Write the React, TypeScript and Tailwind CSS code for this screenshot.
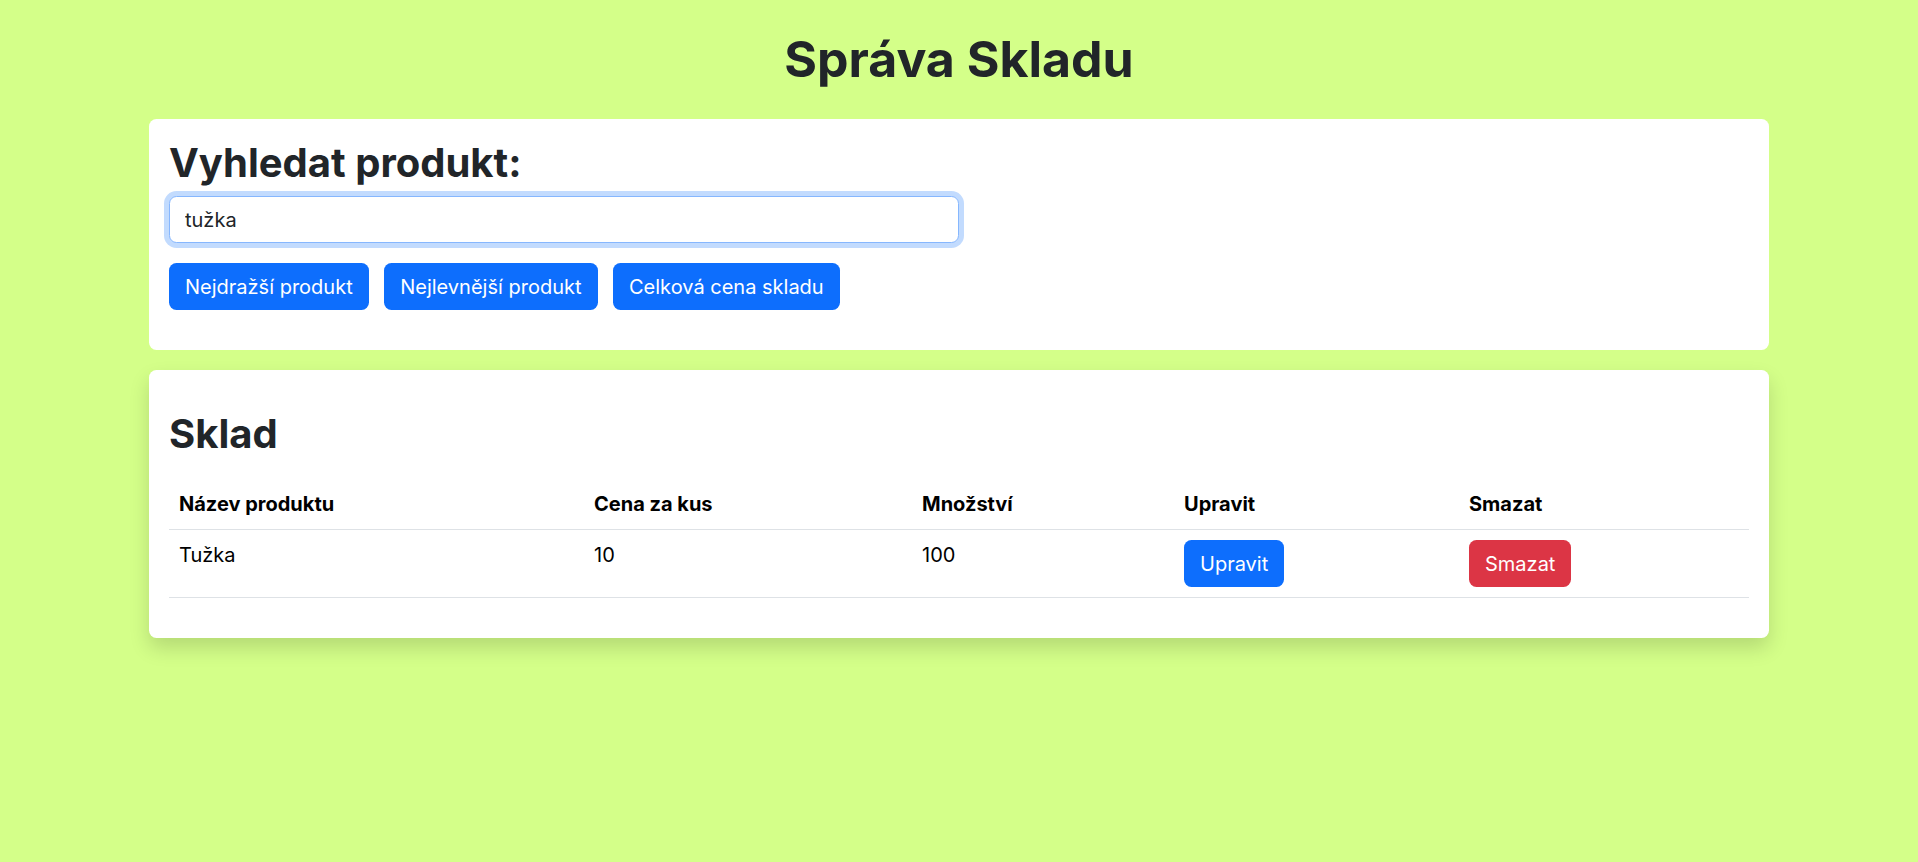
import { useState } from 'react'

type Product = { name: string; price: number; qty: number }

const products: Product[] = [{ name: 'Tužka', price: 10, qty: 100 }]

export default function App() {
  const [query, setQuery] = useState('tužka')

  return (
    <div className="min-h-screen bg-[#d4ff89] font-[Inter,'Noto_Sans',sans-serif] text-[20px] leading-[30px] text-[#212529]">
      <div className="w-[1620px] mx-auto">
        <h1 className="text-center text-[50px] leading-[60px] font-bold pt-[29px] pb-[30px]">Správa Skladu</h1>

        {/* search */}
        <div className="bg-white rounded-[7.5px] p-[20px]">
          <h2 className="text-[40px] leading-[48px] font-bold mb-[9px]">Vyhledat produkt:</h2>
          <input
            autoFocus
            value={query}
            onChange={(e) => setQuery(e.target.value)}
            className="block w-1/2 h-[47px] px-[15px] rounded-[7.5px] border-[1.25px] border-[#86b7fe] bg-white text-[20px] text-[#212529] outline-none shadow-[0_0_0_5px_rgba(13,110,253,0.25)]"
          />
          <div className="flex gap-[15.5px] mt-[20px] mb-[20px]">
            <button className="h-[47px] px-[16px] rounded-[7.5px] bg-[#0d6efd] text-white">Nejdražší produkt</button>
            <button className="h-[47px] px-[16px] rounded-[7.5px] bg-[#0d6efd] text-white">Nejlevnější produkt</button>
            <button className="h-[47px] px-[16px] rounded-[7.5px] bg-[#0d6efd] text-white">Celková cena skladu</button>
          </div>
        </div>

        {/* table */}
        <div className="bg-white rounded-[7.5px] p-[20px] mt-[20px] shadow-[0_10px_20px_rgba(0,0,0,0.15)]">
          <h2 className="text-[40px] leading-[48px] font-bold mt-[20px] mb-[21px]">Sklad</h2>
          <table className="w-full border-collapse text-black mb-[20px]">
            <thead>
              <tr className="border-b border-[#dee2e6] text-left">
                <th className="w-[415px] p-[10px] font-bold">Název produktu</th>
                <th className="w-[328px] p-[10px] font-bold">Cena za kus</th>
                <th className="w-[262px] p-[10px] font-bold">Množství</th>
                <th className="w-[285px] p-[10px] font-bold">Upravit</th>
                <th className="p-[10px] font-bold">Smazat</th>
              </tr>
            </thead>
            <tbody>
              {products.map((p) => (
                <tr key={p.name} className="border-b border-[#dee2e6] align-top">
                  <td className="p-[10px]">{p.name}</td>
                  <td className="p-[10px]">{p.price}</td>
                  <td className="p-[10px]">{p.qty}</td>
                  <td className="p-[10px]">
                    <button className="h-[47px] px-[16px] rounded-[7.5px] bg-[#0d6efd] text-white">Upravit</button>
                  </td>
                  <td className="p-[10px]">
                    <button className="h-[47px] px-[16px] rounded-[7.5px] bg-[#dc3545] text-white">Smazat</button>
                  </td>
                </tr>
              ))}
            </tbody>
          </table>
        </div>
      </div>
    </div>
  )
}
